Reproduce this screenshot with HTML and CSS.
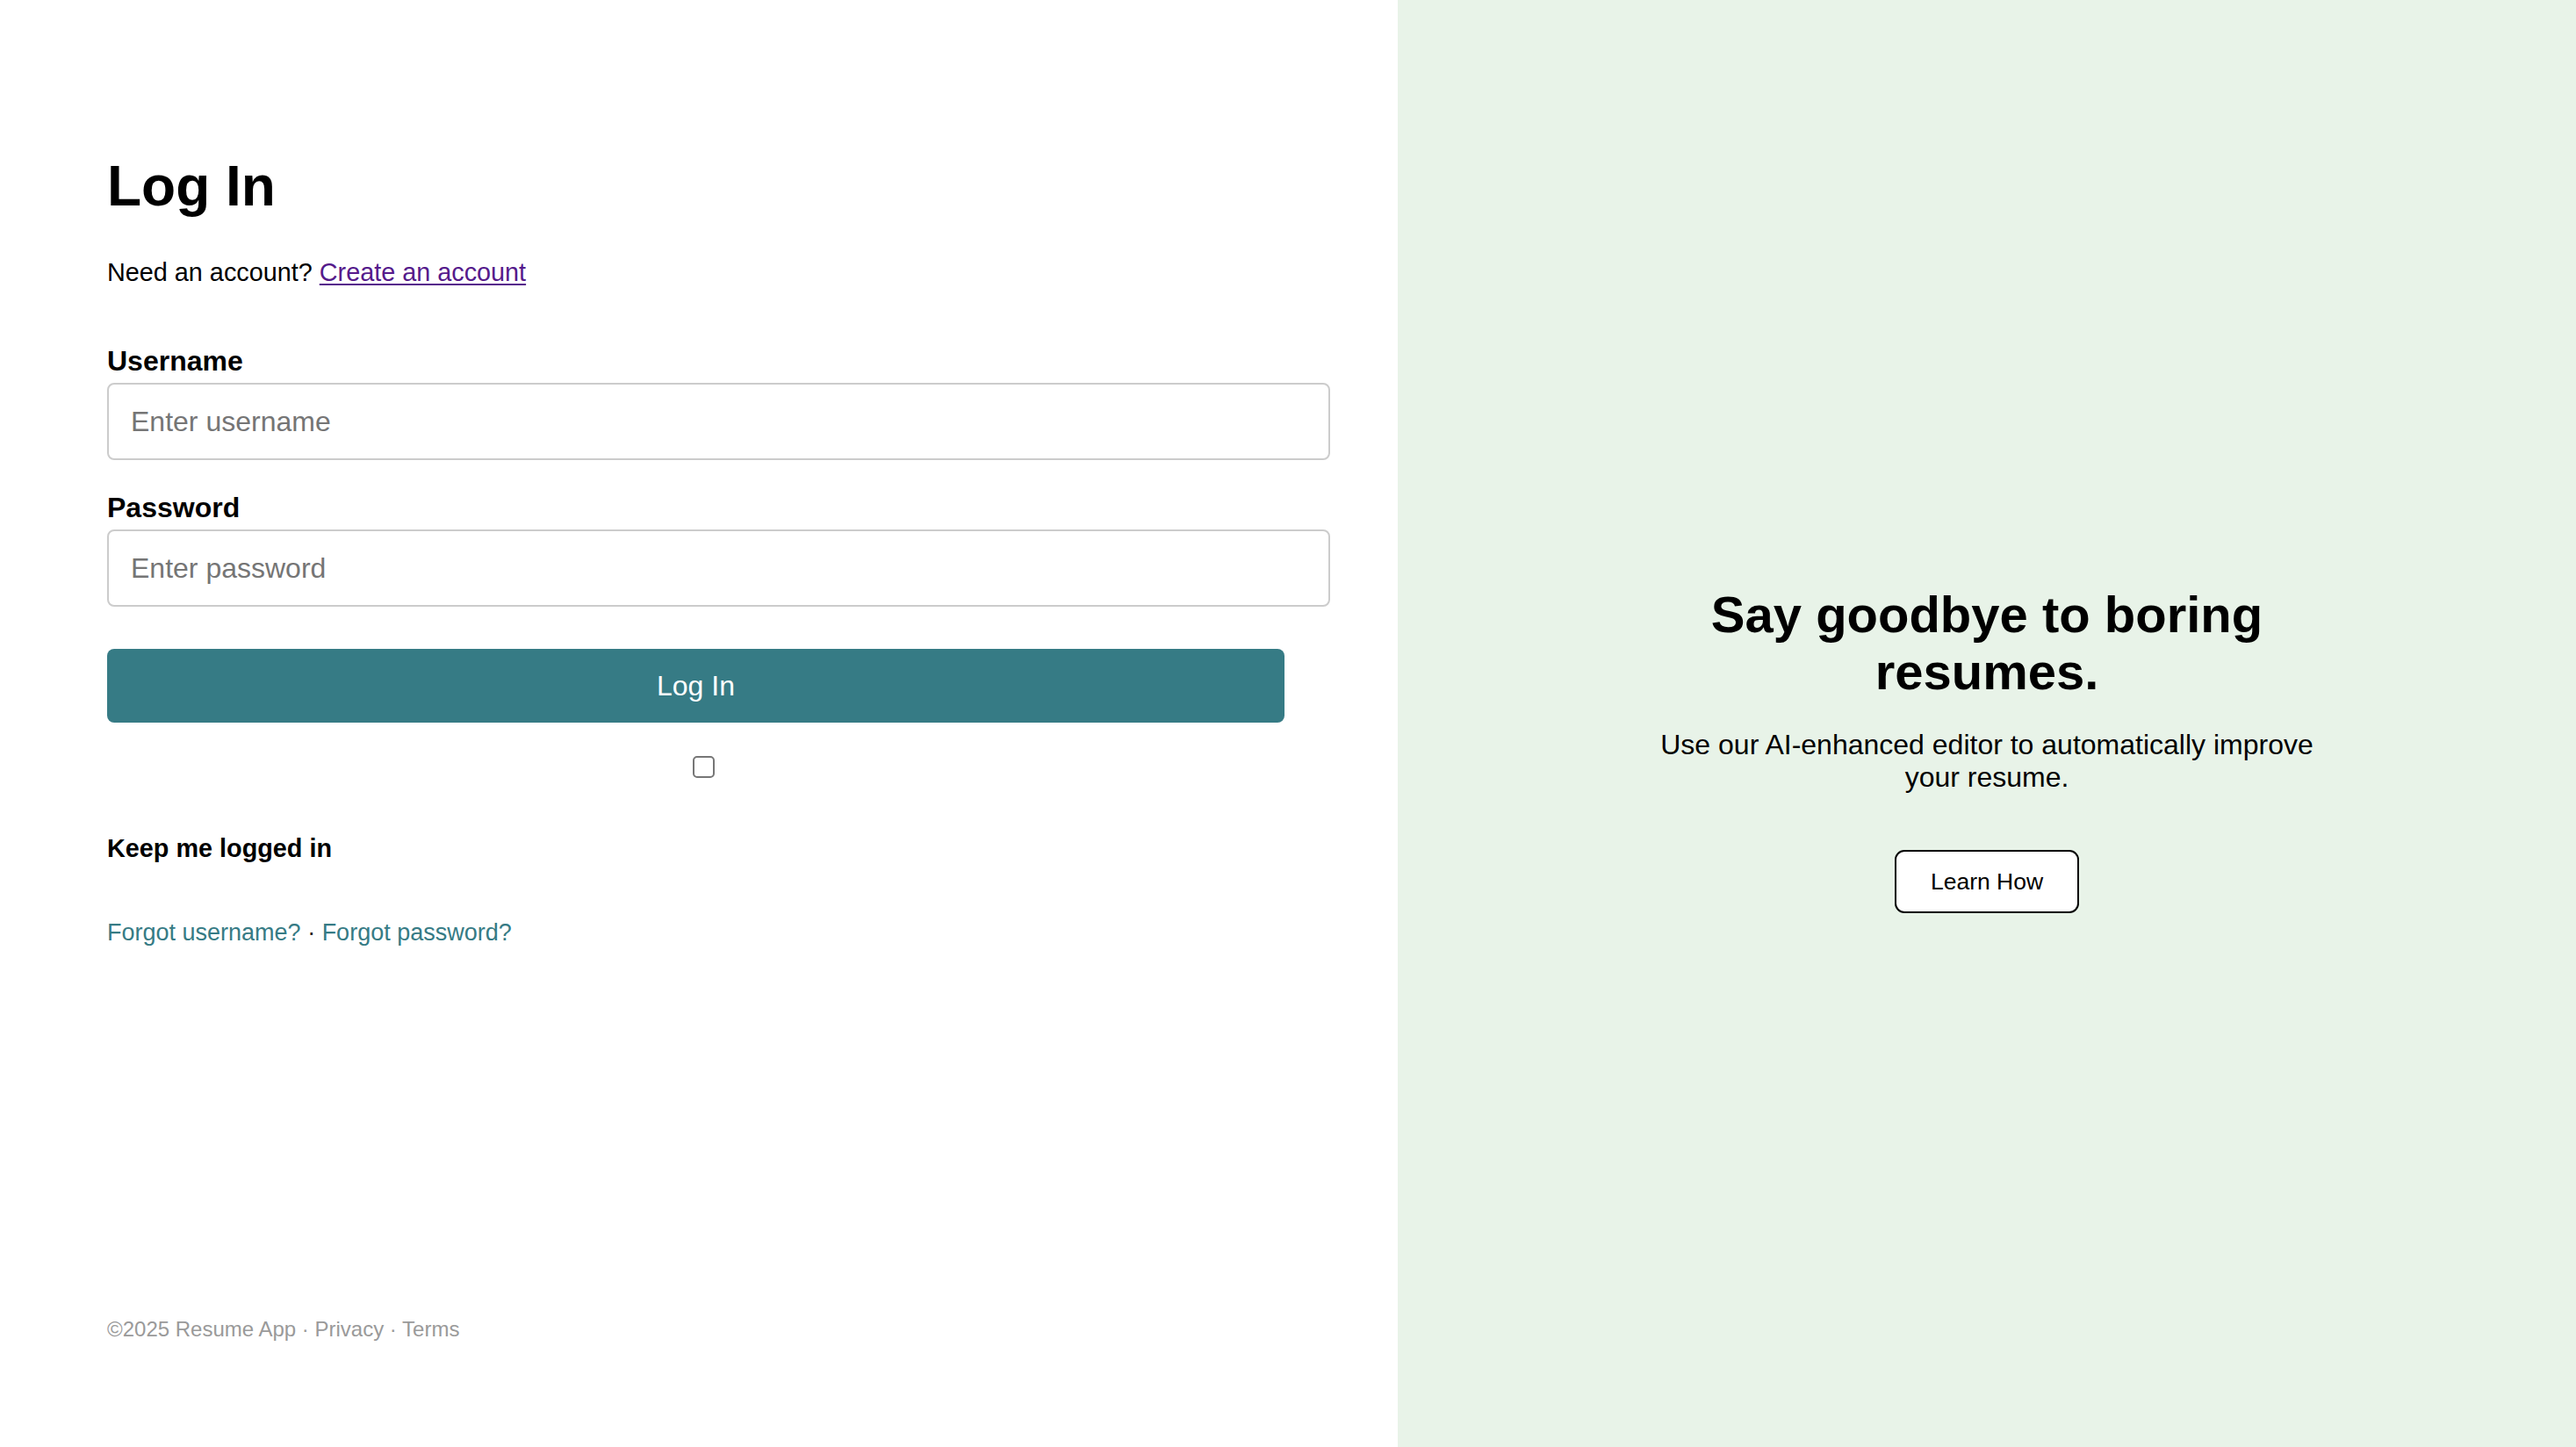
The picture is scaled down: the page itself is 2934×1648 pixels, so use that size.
FILE: index.html
```html
<!DOCTYPE html>
<html lang="en">
<head>
<meta charset="utf-8">
<title>Log In - Resume App</title>
<link rel="stylesheet" href="styles.css">
</head>
<body>
<div class="page">
  <main class="left">
    <div class="form-wrap">
      <h1 class="title">Log In</h1>
      <p class="signup">Need an account? <a class="signup-link" href="#">Create an account</a></p>
      <form class="form">
        <label class="label" for="username">Username</label>
        <input class="field" id="username" type="text" placeholder="Enter username">
        <label class="label label-second" for="password">Password</label>
        <input class="field" id="password" type="password" placeholder="Enter password">
        <button class="submit" type="button">Log In</button>
        <div class="check-row"><input class="check" id="keep" type="checkbox"></div>
        <label class="keep" for="keep">Keep me logged in</label>
        <p class="forgot"><a class="forgot-link" href="#">Forgot username?</a> · <a class="forgot-link" href="#">Forgot password?</a></p>
      </form>
    </div>
    <footer class="footer">©2025 Resume App · Privacy · Terms</footer>
  </main>
  <aside class="right">
    <div class="promo">
      <h2 class="promo-title">Say goodbye to boring resumes.</h2>
      <p class="promo-text">Use our AI-enhanced editor to automatically improve your resume.</p>
      <button class="learn" type="button">Learn How</button>
    </div>
  </aside>
</div>
</body>
</html>
```
FILE: styles.css
```css
html, body {
  margin: 0;
  padding: 0;
}
body {
  font-family: "Liberation Sans", Arial, Helvetica, sans-serif;
  color: #000;
  background: #fff;
}
.page {
  display: flex;
  width: 100%;
  height: 100vh;
}
.left {
  width: 1592px;
  flex: 0 0 1592px;
  box-sizing: border-box;
  padding: 175px 129px 120px 122px;
  display: flex;
  flex-direction: column;
}
.form-wrap {
  width: 1341px;
}
.title {
  margin: 0;
  font-size: 64px;
  font-weight: 700;
  line-height: normal;
}
.signup {
  margin: 45px 0 0;
  font-size: 28.8px;
  line-height: normal;
}
.signup-link {
  color: #551a8b;
  text-decoration: underline;
  text-underline-offset: 3px;
}
.form {
  display: flex;
  flex-direction: column;
  align-items: flex-start;
  margin-top: 66px;
}
.label {
  font-size: 32px;
  font-weight: 700;
  line-height: normal;
  margin-bottom: 6px;
}
.label-second {
  margin-top: 36px;
}
.field {
  box-sizing: border-box;
  width: calc(100% + 52px);
  height: 88px;
  padding: 0 25px;
  border: 2px solid #cccccc;
  border-radius: 8px;
  font-family: inherit;
  font-size: 32px;
  color: #000;
  background: #fff;
  outline: none;
}
.field::placeholder {
  color: #757575;
}
.submit {
  margin-top: 48px;
  width: 100%;
  height: 84px;
  padding: 0;
  border: none;
  border-radius: 8px;
  background: #367b85;
  color: #fff;
  font-family: inherit;
  font-size: 32px;
  cursor: pointer;
}
.check-row {
  margin-top: 38px;
  width: 100%;
  box-sizing: border-box;
  padding-left: 17px;
  display: flex;
  justify-content: center;
}
.check {
  appearance: none;
  -webkit-appearance: none;
  margin: 0;
  width: 25px;
  height: 25px;
  box-sizing: border-box;
  border: 2px solid #767676;
  border-radius: 5px;
  background: #fff;
}
.keep {
  margin-top: 64px;
  font-size: 28.8px;
  font-weight: 700;
  line-height: normal;
}
.forgot {
  margin: 64px 0 0;
  font-size: 27px;
  line-height: normal;
  color: #222;
}
.forgot-link {
  color: #367b85;
  text-decoration: none;
}
.footer {
  margin-top: auto;
  font-size: 24px;
  line-height: normal;
  color: #9a9a9a;
}
.right {
  flex: 1 1 auto;
  background: #e8f3e8;
  display: flex;
  align-items: center;
  justify-content: center;
}
.promo {
  margin-top: 59px;
  max-width: 786px;
  text-align: center;
  display: flex;
  flex-direction: column;
  align-items: center;
}
.promo-title {
  margin: 0;
  font-size: 58px;
  line-height: 65px;
  font-weight: 700;
}
.promo-text {
  margin: 33px 0 0;
  font-size: 32px;
  line-height: normal;
}
.learn {
  margin-top: 64px;
  height: 72px;
  padding: 0 39px;
  border: 2px solid #000;
  border-radius: 11px;
  background: #fff;
  color: #000;
  font-family: inherit;
  font-size: 26.5px;
  cursor: pointer;
}
```
